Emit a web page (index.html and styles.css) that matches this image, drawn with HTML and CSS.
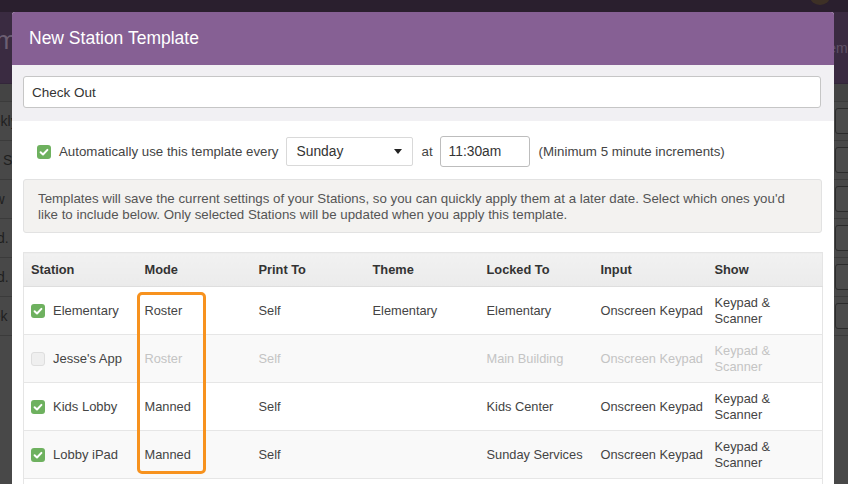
FILE: index.html
```html
<!DOCTYPE html>
<html>
<head>
<meta charset="utf-8">
<link rel="stylesheet" href="styles.css">
</head>
<body>
<div class="app">
  <div class="topbar"><span class="avatar"></span></div>
  <div class="pagehead">
    <span class="pagetitle">Templates</span>
    <span class="pagelink">Templates</span>
  </div>
  <div class="subbar"></div>
  <div class="bgrow"><span class="bgtext">Weekly</span><span class="bgbtn"></span></div>
  <div class="bgrow"><span class="bgtext">First S</span><span class="bgbtn"></span></div>
  <div class="bgrow"><span class="bgtext">Midw</span><span class="bgbtn"></span></div>
  <div class="bgrow"><span class="bgtext">Sund.</span><span class="bgbtn"></span></div>
  <div class="bgrow"><span class="bgtext">Sund.</span><span class="bgbtn"></span></div>
  <div class="bgrow"><span class="bgtext">Week</span><span class="bgbtn"></span></div>

  <div class="modal">
    <div class="modal-head">New Station Template</div>
    <div class="name-band">
      <div class="text-input">Check Out</div>
    </div>
    <div class="modal-body">
      <div class="auto-row">
        <span class="cb on"><svg viewBox="0 0 14 14" width="14" height="14"><path d="M3.6 7.3 L6 9.5 L10.4 4.9" fill="none" stroke="#fff" stroke-width="2" stroke-linecap="round" stroke-linejoin="round"/></svg></span>
        <span class="auto-label">Automatically use this template every</span>
        <div class="select"><span>Sunday</span><span class="caret"></span></div>
        <span class="at">at</span>
        <div class="time-input">11:30am</div>
        <span class="hint">(Minimum 5 minute increments)</span>
      </div>
      <div class="info">Templates will save the current settings of your Stations, so you can quickly apply them at a later date. Select which ones you'd like to include below. Only selected Stations will be updated when you apply this template.</div>
      <table class="stations">
        <colgroup>
          <col class="c"><col class="c"><col class="c"><col class="c"><col class="c"><col class="c"><col class="c last">
        </colgroup>
        <thead>
          <tr><th>Station</th><th>Mode</th><th>Print To</th><th>Theme</th><th>Locked To</th><th>Input</th><th>Show</th></tr>
        </thead>
        <tbody>
          <tr>
            <td><div class="station"><span class="cb on"><svg viewBox="0 0 14 14" width="14" height="14"><path d="M3.6 7.3 L6 9.5 L10.4 4.9" fill="none" stroke="#fff" stroke-width="2" stroke-linecap="round" stroke-linejoin="round"/></svg></span><span class="sname">Elementary</span></div></td>
            <td>Roster</td><td>Self</td><td>Elementary</td><td>Elementary</td><td class="nw">Onscreen Keypad</td><td>Keypad &amp; Scanner</td>
          </tr>
          <tr class="off">
            <td><div class="station"><span class="cb"></span><span class="sname">Jesse's App</span></div></td>
            <td>Roster</td><td>Self</td><td></td><td>Main Building</td><td class="nw">Onscreen Keypad</td><td>Keypad &amp; Scanner</td>
          </tr>
          <tr>
            <td><div class="station"><span class="cb on"><svg viewBox="0 0 14 14" width="14" height="14"><path d="M3.6 7.3 L6 9.5 L10.4 4.9" fill="none" stroke="#fff" stroke-width="2" stroke-linecap="round" stroke-linejoin="round"/></svg></span><span class="sname">Kids Lobby</span></div></td>
            <td>Manned</td><td>Self</td><td></td><td>Kids Center</td><td class="nw">Onscreen Keypad</td><td>Keypad &amp; Scanner</td>
          </tr>
          <tr class="alt">
            <td><div class="station"><span class="cb on"><svg viewBox="0 0 14 14" width="14" height="14"><path d="M3.6 7.3 L6 9.5 L10.4 4.9" fill="none" stroke="#fff" stroke-width="2" stroke-linecap="round" stroke-linejoin="round"/></svg></span><span class="sname">Lobby iPad</span></div></td>
            <td>Manned</td><td>Self</td><td></td><td class="nw">Sunday Services</td><td class="nw">Onscreen Keypad</td><td>Keypad &amp; Scanner</td>
          </tr>
          <tr>
            <td>&nbsp;</td><td></td><td></td><td></td><td></td><td></td><td></td>
          </tr>
        </tbody>
      </table>
    </div>
    <div class="highlight"></div>
  </div>
</div>
</body>
</html>
```

FILE: styles.css
```css
* { box-sizing: border-box; }
html, body { margin: 0; padding: 0; }
body {
  background: #ffffff;
  width: 855px;
  height: 488px;
  overflow: hidden;
  font-family: "Liberation Sans", Arial, Helvetica, sans-serif;
  color: #444;
}
.app {
  position: relative;
  width: 848px;
  height: 484px;
  background: #484848;
  overflow: hidden;
}
.topbar {
  height: 12px;
  background: #2a1f2e;
  position: relative;
}
.avatar {
  position: absolute;
  left: 810px;
  top: -12px;
  width: 20px;
  height: 17px;
  border-radius: 50%;
  background: #3d3026;
}
.pagehead {
  height: 72px;
  background: #3a2b41;
  display: grid;
  grid-template-columns: 1fr auto;
  align-items: center;
  border-bottom: 1px solid #33263a;
}
.pagetitle {
  font-size: 26px;
  color: #6c5f72;
  margin-left: -32px;
  margin-top: -14px;
}
.pagelink {
  margin-right: -37px;
  font-size: 14px;
  color: #5f5166;
  white-space: nowrap;
}
.subbar {
  height: 18px;
  background: #444;
  border-bottom: 1px solid #3b3b3b;
}
.bgrow {
  height: 39px;
  display: flex;
  align-items: center;
  border-bottom: 1px solid #3b3b3b;
}
.bgtext {
  font-size: 14px;
  color: #1f1f1f;
  margin-left: -28px;
}
.bgbtn {
  margin-left: auto;
  margin-right: -30px;
  width: 43px;
  height: 26px;
  border: 1px solid #2c2c2c;
  border-radius: 3px;
  background: #4b4b4b;
}

.modal {
  position: absolute;
  left: 12px;
  top: 12px;
  width: 822px;
  height: 500px;
  background: #fff;
  border-radius: 3px 3px 0 0;
}
.modal-head {
  height: 53px;
  background: #866094;
  color: #fff;
  font-size: 17.5px;
  display: flex;
  align-items: center;
  padding-left: 17px;
  border-radius: 3px 3px 0 0;
}
.name-band {
  background: #f1f0f3;
  height: 56px;
  padding: 11px 13px 0 11px;
}
.text-input {
  height: 32px;
  border: 1px solid #c6c6c6;
  border-radius: 3px;
  background: #fff;
  font-size: 13.5px;
  color: #333;
  padding-left: 8px;
  display: flex;
  align-items: center;
}
.modal-body {
  padding: 0 12px 0 11px;
}
.auto-row {
  margin-top: 15px;
  height: 31px;
  display: flex;
  align-items: center;
  padding-left: 14px;
  font-size: 13.3px;
  color: #444;
}
.cb {
  width: 14px;
  height: 14px;
  border-radius: 3px;
  background: #efefef;
  border: 1px solid #dedede;
  display: inline-flex;
  flex: none;
}
.cb.on {
  background: #6eb15f;
  border: none;
}
.cb svg { display: block; }
.auto-label { margin-left: 8px; }
.select {
  margin-left: 7px;
  width: 127px;
  height: 29px;
  border: 1px solid #d9d9d9;
  border-radius: 2px;
  background: #fff;
  display: flex;
  align-items: center;
  padding: 0 10px 0 10px;
  justify-content: space-between;
  color: #333;
  font-size: 13.8px;
}
.caret {
  width: 0;
  height: 0;
  border-left: 4px solid transparent;
  border-right: 4px solid transparent;
  border-top: 5px solid #222;
}
.at { margin-left: 9px; }
.time-input {
  margin-left: 7px;
  width: 90px;
  height: 31px;
  border: 1px solid #bdbdbd;
  border-radius: 3px;
  display: flex;
  align-items: center;
  padding-left: 8px;
  color: #333;
  font-size: 13.8px;
}
.hint { margin-left: 9px; }
.info {
  margin-top: 12px;
  height: 54px;
  background: #f3f2f0;
  border: 1px solid #e2e2e2;
  border-radius: 3px;
  padding: 11px 14px 0 14px;
  font-size: 13.3px;
  line-height: 16px;
  color: #555;
}
.stations {
  margin-top: 19px;
  width: 799px;
  border-collapse: collapse;
  table-layout: fixed;
  font-size: 12.8px;
  border: 1px solid #e5e5e5;
}
.stations col.c { width: 114px; }
.stations col.last { width: 115px; }
.stations th {
  height: 34px;
  text-align: left;
  font-weight: bold;
  color: #333;
  padding: 0 2px 0 7px;
  background: linear-gradient(#f1f1f1, #ebebeb);
  border-bottom: 1px solid #dedede;
}
.stations td {
  height: 48px;
  padding: 0 2px 0 7px;
  line-height: 16px;
  color: #444;
  border-bottom: 1px solid #e6e6e6;
  vertical-align: middle;
}
.stations td.nw { white-space: nowrap; }
.stations tr.off td { background: #f9f9f9; color: #c4c4c4; }
.stations tr.alt td { background: #f9f9f9; }
.station {
  display: flex;
  align-items: center;
}
.sname { margin-left: 8px; color: #444; font-size: 13px; }
tr.off .sname { color: #444; }
.highlight {
  position: absolute;
  left: 125px;
  top: 280px;
  width: 69px;
  height: 182px;
  border: 3px solid #f7921e;
  border-radius: 5px;
}
```
